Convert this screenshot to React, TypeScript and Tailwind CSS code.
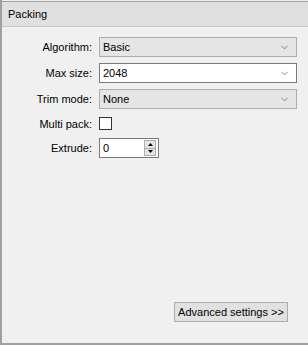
import { ChevronDown } from 'lucide-react';

const font = { fontFamily: '"Liberation Sans", Arial, sans-serif' };

const Label = ({ children, className = '' }: { children: React.ReactNode; className?: string }) => (
    <span className={`w-[90px] shrink-0 text-right leading-[14px] ${className}`}>{children}</span>
);

const Combo = ({ value, editable }: { value: string; editable?: boolean }) => (
    <div
        className={`ml-[7px] flex h-[20px] w-[198px] items-center justify-between border pl-[3px] pr-[6px] ${
            editable ? 'border-[#7a7a7a] bg-white' : 'border-[#adadad] bg-[#e5e5e5]'
        }`}
    >
        <span className="leading-[14px]">{value}</span>
        <ChevronDown size={11} strokeWidth={1.5} className="text-[#555]" />
    </div>
);

export default function App() {
    return (
        <div className="flex h-[345px] w-[308px] flex-col border-l-2 border-[#a0a0a0] bg-[#f0f0f0] text-[11px] text-black" style={font}>
            {/* Header */}
            <div className="mt-px flex h-[26px] items-center border-t border-b border-t-[#a0a0a0] border-b-[#c8c8c8] bg-[#e0e0e0] pl-[6px]">
                <span className="leading-[14px]">Packing</span>
            </div>

            {/* Form */}
            <div className="flex flex-1 flex-col pt-[10px]">
                <div className="flex items-center">
                    <Label>Algorithm:</Label>
                    <Combo value="Basic" />
                </div>
                <div className="mt-[6px] flex items-center">
                    <Label>Max size:</Label>
                    <Combo value="2048" editable />
                </div>
                <div className="mt-[6px] flex items-center">
                    <Label>Trim mode:</Label>
                    <Combo value="None" />
                </div>
                <div className="flex h-[29px] items-center">
                    <Label>Multi pack:</Label>
                    <div className="ml-[7px] h-[13px] w-[13px] border border-[#333] bg-white" />
                </div>
                <div className="flex items-center">
                    <Label>Extrude:</Label>
                    <div className="ml-[7px] flex h-[20px] w-[60px] items-center justify-between border border-[#7a7a7a] bg-white pl-[3px] pr-[2px]">
                        <span className="leading-[14px]">0</span>
                        <div className="flex h-[16px] w-[12px] flex-col border border-[#adadad] bg-[#e5e5e5]">
                            <div className="flex flex-1 items-center justify-center border-b border-[#adadad]">
                                <svg width="5" height="3" viewBox="0 0 5 3"><path d="M0 3 L2.5 0 L5 3 Z" fill="#000" /></svg>
                            </div>
                            <div className="flex flex-1 items-center justify-center">
                                <svg width="5" height="3" viewBox="0 0 5 3"><path d="M0 0 L2.5 3 L5 0 Z" fill="#000" /></svg>
                            </div>
                        </div>
                    </div>
                </div>

                <div className="mt-auto mb-[21px] flex justify-end pr-[20px]">
                    <button className="h-[20px] w-[114px] border border-[#adadad] bg-[#e1e1e1] leading-[14px]">
                        Advanced settings &gt;&gt;
                    </button>
                </div>
            </div>
            <div className="h-[2px] bg-[#a0a0a0]" />
        </div>
    );
}
